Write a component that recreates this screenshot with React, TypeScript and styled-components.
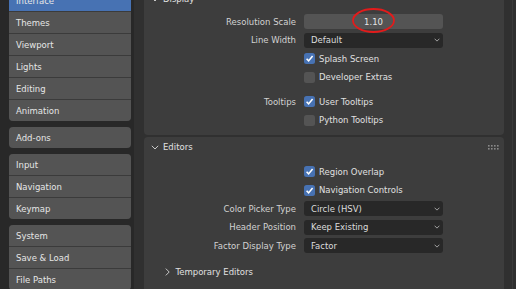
import React from 'react';
import styled, { createGlobalStyle } from 'styled-components';

const GlobalStyle = createGlobalStyle`
  html, body {
    margin: 0;
    padding: 0;
    background: #282828;
    overflow: hidden;
  }
  * {
    box-sizing: border-box;
  }
`;

const Window = styled.div`
  width: 516px;
  height: 289px;
  display: flex;
  overflow: hidden;
  font-family: 'DejaVu Sans', 'Liberation Sans', sans-serif;
  font-size: 8.5px;
  user-select: none;
`;

const Sidebar = styled.nav`
  width: 134px;
  flex-shrink: 0;
  background: #282828;
  padding: 0 3px 0 9px;
  overflow: hidden;
`;

const NavList = styled.div`
  margin-top: -10px;
  display: flex;
  flex-direction: column;
  gap: 6px;
`;

const NavGroup = styled.div`
  display: flex;
  flex-direction: column;
  gap: 1px;
  background: #3b3b3b;
  border-radius: 4px;
  overflow: hidden;
`;

const NavItem = styled.div<{ $active?: boolean }>`
  height: 21px;
  flex-shrink: 0;
  display: flex;
  align-items: center;
  padding-left: 7px;
  background: ${({ $active }) => ($active ? '#4772b3' : '#545454')};
  color: #e6e6e6;
`;

const Region = styled.main`
  flex: 1;
  background: #303030;
  padding: 0 8px 0 10px;
  overflow: hidden;
`;

const Scroll = styled.div`
  margin-top: -11.5px;
  display: flex;
  flex-direction: column;
  gap: 2px;
`;

const Edge = styled.div`
  width: 4px;
  flex-shrink: 0;
  background: #2f2f2f;
  border-left: 1px solid #3a3a3a;
`;

const Panel = styled.section`
  background: #3d3d3d;
  border-radius: 4px;
`;

const PanelHeader = styled.div<{ $sub?: boolean }>`
  height: 21px;
  flex-shrink: 0;
  display: flex;
  align-items: center;
  gap: ${({ $sub }) => ($sub ? 5.5 : 4)}px;
  padding: 0 5px 0 ${({ $sub }) => ($sub ? 21 : 7)}px;
  color: #e0e0e0;
`;

const Grip = styled.svg`
  margin-left: auto;
`;

const PanelBody = styled.div<{ $padTop: number; $padBottom: number }>`
  display: flex;
  flex-direction: column;
  padding: ${({ $padTop, $padBottom }) => `${$padTop}px 0 ${$padBottom}px`};
`;

const Row = styled.div`
  height: 18.5px;
  flex-shrink: 0;
  display: grid;
  grid-template-columns: 152px 139px;
  column-gap: 8px;
  align-items: center;
`;

const Spacer = styled.div<{ $h: number }>`
  height: ${({ $h }) => $h}px;
  flex-shrink: 0;
`;

const Label = styled.div`
  text-align: right;
  color: #d2d2d2;
  white-space: nowrap;
`;

const NumField = styled.div`
  position: relative;
  height: 15px;
  background: #545454;
  border-radius: 3px;
  display: flex;
  align-items: center;
  justify-content: center;
  color: #e6e6e6;
`;

const Annotation = styled.svg`
  position: absolute;
  left: 48px;
  top: -6.5px;
  overflow: visible;
`;

const Select = styled.div`
  height: 15px;
  background: #282828;
  border-radius: 3px;
  display: flex;
  align-items: center;
  justify-content: space-between;
  padding: 0 3px 0 7px;
  color: #dcdcdc;
`;

const Check = styled.label`
  display: flex;
  align-items: center;
  gap: 4px;
  color: #e0e0e0;
  white-space: nowrap;
`;

const Box = styled.span<{ $on?: boolean }>`
  width: 11px;
  height: 11px;
  border-radius: 2.5px;
  background: ${({ $on }) => ($on ? '#4772b3' : '#545454')};
  display: flex;
  align-items: center;
  justify-content: center;
`;

const ChevronDown = ({ size = 8 }: { size?: number }) => (
  <svg width={size} height={size / 2 + 1} viewBox="0 0 8 5">
    <polyline points="0.8,0.8 4,4 7.2,0.8" fill="none" stroke="#c8c8c8" strokeWidth="1" />
  </svg>
);

const ChevronRight = () => (
  <svg width="5" height="8" viewBox="0 0 5 8">
    <polyline points="0.8,0.6 4.2,4 0.8,7.4" fill="none" stroke="#c8c8c8" strokeWidth="1" />
  </svg>
);

const Checkbox = ({ on, children }: { on?: boolean; children: React.ReactNode }) => (
  <Check>
    <Box $on={on}>
      {on && (
        <svg width="9" height="9" viewBox="0 0 9 9">
          <polyline points="1.6,4.8 3.6,6.9 7.6,2.1" fill="none" stroke="#ffffff" strokeWidth="1.6" />
        </svg>
      )}
    </Box>
    {children}
  </Check>
);

const Dropdown = ({ value }: { value: string }) => (
  <Select>
    <span>{value}</span>
    <ChevronDown size={6} />
  </Select>
);

const navGroups = [
  ['Interface', 'Themes', 'Viewport', 'Lights', 'Editing', 'Animation'],
  ['Add-ons'],
  ['Input', 'Navigation', 'Keymap'],
  ['System', 'Save & Load', 'File Paths'],
];

const App = () => {
  return (
    <>
      <GlobalStyle />
      <Window>
        <Sidebar>
          <NavList>
            {navGroups.map((group, i) => (
              <NavGroup key={i}>
                {group.map((item) => (
                  <NavItem key={item} $active={item === 'Interface'}>
                    {item}
                  </NavItem>
                ))}
              </NavGroup>
            ))}
          </NavList>
        </Sidebar>
        <Region>
          <Scroll>
            <Panel>
              <PanelHeader>
                <ChevronDown />
                <span>Display</span>
              </PanelHeader>
              <PanelBody $padTop={2.75} $padBottom={5.25}>
                <Row>
                  <Label>Resolution Scale</Label>
                  <NumField>
                    1.10
                    <Annotation width="43" height="25" viewBox="0 0 43 25">
                      <ellipse cx="21.5" cy="12.5" rx="20.5" ry="11.5" fill="none" stroke="#e31b1b" strokeWidth="1.8" />
                    </Annotation>
                  </NumField>
                </Row>
                <Row>
                  <Label>Line Width</Label>
                  <Dropdown value="Default" />
                </Row>
                <Row>
                  <span />
                  <Checkbox on>Splash Screen</Checkbox>
                </Row>
                <Row>
                  <span />
                  <Checkbox>Developer Extras</Checkbox>
                </Row>
                <Spacer $h={6} />
                <Row>
                  <Label>Tooltips</Label>
                  <Checkbox on>User Tooltips</Checkbox>
                </Row>
                <Row>
                  <span />
                  <Checkbox>Python Tooltips</Checkbox>
                </Row>
              </PanelBody>
            </Panel>
            <Panel>
              <PanelHeader>
                <ChevronDown />
                <span>Editors</span>
                <Grip width="11" height="5" viewBox="0 0 11 5">
                  {[0, 1, 2, 3].map((c) =>
                    [0, 1].map((r) => (
                      <rect key={`${c}-${r}`} x={c * 3} y={r * 3} width="1.6" height="1.6" fill="#8a8a8a" />
                    ))
                  )}
                </Grip>
              </PanelHeader>
              <PanelBody $padTop={5} $padBottom={0}>
                <Row>
                  <span />
                  <Checkbox on>Region Overlap</Checkbox>
                </Row>
                <Row>
                  <span />
                  <Checkbox on>Navigation Controls</Checkbox>
                </Row>
                <Row>
                  <Label>Color Picker Type</Label>
                  <Dropdown value="Circle (HSV)" />
                </Row>
                <Row>
                  <Label>Header Position</Label>
                  <Dropdown value="Keep Existing" />
                </Row>
                <Row>
                  <Label>Factor Display Type</Label>
                  <Dropdown value="Factor" />
                </Row>
                <Spacer $h={6.5} />
                <PanelHeader $sub>
                  <ChevronRight />
                  <span>Temporary Editors</span>
                </PanelHeader>
                <PanelHeader $sub>
                  <ChevronRight />
                  <span>Status Bar</span>
                </PanelHeader>
              </PanelBody>
            </Panel>
          </Scroll>
        </Region>
        <Edge />
      </Window>
    </>
  );
};

export default App;
